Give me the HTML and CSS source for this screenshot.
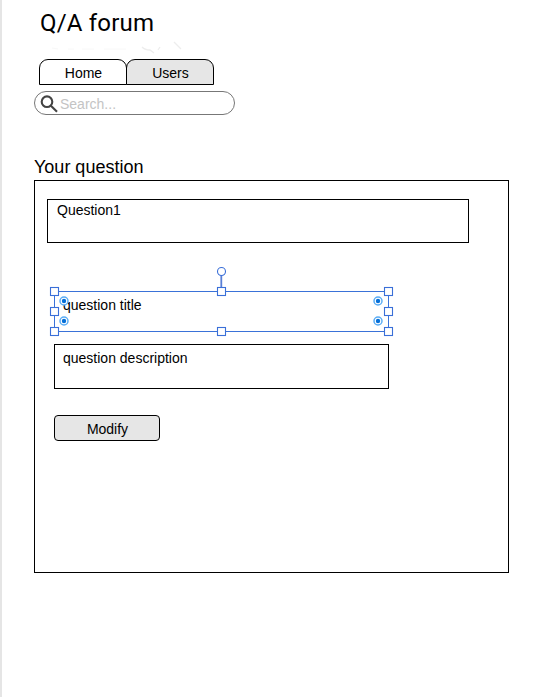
FILE: index.html
```html
<!DOCTYPE html>
<html lang="en">
<head>
<meta charset="utf-8">
<title>Q/A forum</title>
<link rel="stylesheet" href="styles.css">
</head>
<body>
<main class="page">
  <h1 class="title">Q/A forum</h1>
  <svg class="smudge" width="150" height="16" viewBox="0 0 150 16" aria-hidden="true">
    <path d="M18 10l6 1M34 11h6M48 11h12M70 11h10M80 11h12" stroke="#f8f8f8"/>
    <path d="M108 9q3 3 8 3l4 3M124 12l2-3M140 4l7 7" stroke="#ededed" stroke-width="1.300"/>
  </svg>
  <nav class="tabs">
    <a class="tab">Home</a>
    <a class="tab tab-shaded">Users</a>
  </nav>
  <div class="search">
    <svg class="search-icon" width="18" height="18" viewBox="0 0 18 18">
      <circle cx="7" cy="6.700" r="5.300"/>
      <path d="M10.900 10.700L17 16.800"/>
    </svg>
    <span>Search...</span>
  </div>
  <h2 class="heading">Your question</h2>
  <section class="panel">
    <div class="box question">Question1</div>
    <div class="selected">
      <span>question title</span>
      <svg class="selection" width="345" height="71" viewBox="0 0 345 71">
        <path class="edge" d="M5.500 25.500H339.500V65.500H5.500Z"/>
        <path class="stem" d="M172.300 9.500V25"/>
        <circle class="handle" cx="172.500" cy="5.500" r="4"/>
        <g class="handle">
          <rect x="1.500" y="21.500" width="8" height="8"/>
          <rect x="168.500" y="21.500" width="8" height="8"/>
          <rect x="335.500" y="21.500" width="8" height="8"/>
          <rect x="1.500" y="41.500" width="8" height="8"/>
          <rect x="335.500" y="41.500" width="8" height="8"/>
          <rect x="1.500" y="61.500" width="8" height="8"/>
          <rect x="168.500" y="61.500" width="8" height="8"/>
          <rect x="335.500" y="61.500" width="8" height="8"/>
        </g>
        <g class="ring">
          <circle cx="15" cy="35" r="4"/>
          <circle cx="15" cy="55" r="4"/>
          <circle cx="329" cy="35" r="4"/>
          <circle cx="329" cy="55" r="4"/>
        </g>
        <g class="dot">
          <circle cx="15" cy="35" r="2.200"/>
          <circle cx="15" cy="55" r="2.200"/>
          <circle cx="329" cy="35" r="2.200"/>
          <circle cx="329" cy="55" r="2.200"/>
        </g>
      </svg>
    </div>
    <div class="box description">question description</div>
    <button class="modify">Modify</button>
  </section>
</main>
</body>
</html>
```
FILE: styles.css
```css
* { box-sizing: border-box; }

body {
  margin: 0;
  background: #fff;
  color: #000;
  font: 14px/16px "Liberation Sans", Arial, sans-serif;
}

.page {
  height: 697px;
  padding: 8px 0 0 32px;
  border-left: 2px solid #e5e5e5;
  overflow: hidden;
}

.title {
  margin: 0 0 0 6px;
  font: 400 24px/30px Roboto, sans-serif;
  letter-spacing: 0.2px;
}

.smudge {
  display: block;
  height: 16px;
  margin-bottom: 5px;
  fill: none;
}

.tabs {
  display: flex;
  margin-left: 5px;
}

.tab {
  width: 88px;
  height: 26px;
  padding-left: 1px;
  border: 1px solid #000;
  border-radius: 9px 9px 0 0;
  line-height: 27px;
  text-align: center;
}

.tab-shaded {
  margin-left: -1px;
  background: #e6e6e6;
}

.search {
  display: flex;
  align-items: center;
  width: 201px;
  height: 24px;
  margin-top: 6px;
  padding: 2px 0 0 5px;
  border: 1px solid #777;
  border-radius: 12px;
  color: #c4c4c4;
}

.search-icon {
  margin: -1px 2px 0 0;
  fill: none;
  stroke: #444;
  stroke-width: 2.1;
}

.heading {
  margin: 42px 0 2px;
  font-size: 18px;
  font-weight: 400;
  line-height: 21px;
}

.panel {
  display: flex;
  flex-direction: column;
  align-items: flex-start;
  width: 475px;
  height: 393px;
  padding: 18px 0 0 12px;
  border: 1px solid #000;
}

.box { border: 1px solid #000; }

.question {
  width: 422px;
  height: 44px;
  padding: 2px 9px;
}

.selected {
  position: relative;
  width: 335px;
  height: 41px;
  margin: 48px 0 0 7px;
  padding: 6px 9px;
}

.selection {
  position: absolute;
  left: -5px;
  top: -25px;
  fill: none;
}

.edge { stroke: #3a72d8; }
.stem { stroke: #5a7fd6; stroke-width: 1.8; }
.handle { fill: #fff; stroke: #3a6fd8; stroke-width: 1.1; }
.ring { fill: #fff; stroke: #5badf5; stroke-width: 1.5; }
.dot { fill: #0670d8; }

.description {
  width: 335px;
  height: 45px;
  margin: 12px 0 0 7px;
  padding: 5px 8px;
}

.modify {
  width: 106px;
  height: 26px;
  margin: 26px 0 0 7px;
  padding: 2px 0 0 1px;
  border: 1px solid #000;
  border-radius: 4px;
  background: #e6e6e6;
  color: #000;
  font: inherit;
}
```
